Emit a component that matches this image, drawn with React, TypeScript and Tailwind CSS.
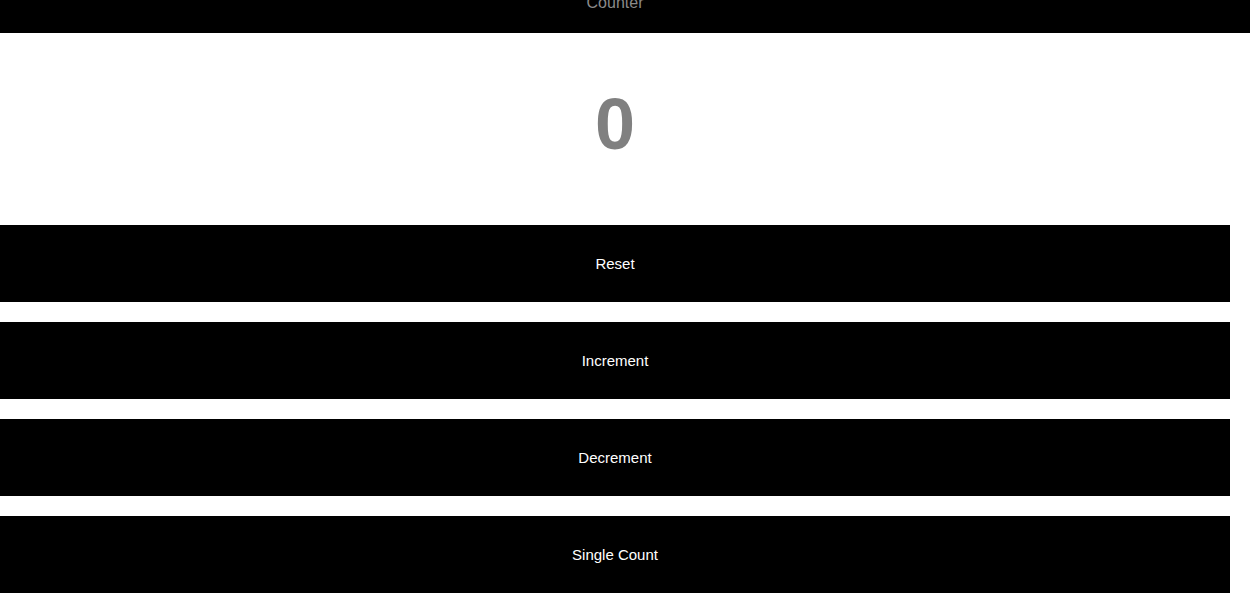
export default function App() {
  const buttons = ["Reset", "Increment", "Decrement", "Single Count"];

  return (
    <div className="min-h-screen bg-white font-['Liberation_Sans',Arial,sans-serif] overflow-hidden">
      {/* Header */}
      <header className="h-[33px] bg-black overflow-hidden">
        <div className="w-[1230px] text-center text-[16px] leading-none text-[#8a8a8a] -mt-[5px]">
          Counter
        </div>
      </header>

      <div className="w-[1230px]">
        {/* Count */}
        <div className="h-[192px] pb-[10px] flex items-center justify-center">
          <span className="text-[72px] leading-none font-bold text-[#808080]">0</span>
        </div>

        {/* Buttons */}
        <div className="flex flex-col gap-5">
          {buttons.map((label) => (
            <button
              key={label}
              className="h-[77px] w-full bg-black text-white text-[15px] leading-none"
            >
              {label}
            </button>
          ))}
        </div>
      </div>
    </div>
  );
}
